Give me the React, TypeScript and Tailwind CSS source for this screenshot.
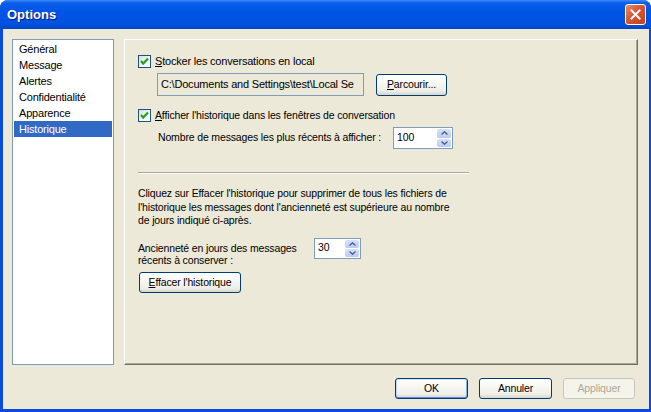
import React from "react";

const btn =
  "h-[21px] rounded-[3px] border border-[#003C74] bg-[linear-gradient(180deg,#FFFFFF_0%,#F7F6F1_45%,#EEEDE7_80%,#D9D4C8_100%)] leading-none text-black flex items-center justify-center";

function Check() {
  return (
    <div className="w-[13px] h-[13px] border border-[#1C5180] bg-[linear-gradient(135deg,#DCDCD7_0%,#F6F6F3_60%,#FFFFFF_100%)] flex items-center justify-center shrink-0">
      <svg width="11" height="11" viewBox="0 0 11 11">
        <polyline points="2,5 4.2,7.5 9,2.5" fill="none" stroke="#21A121" strokeWidth="2.2" />
      </svg>
    </div>
  );
}

function Spin({ value, w }: { value: string; w: string }) {
  return (
    <div className="flex h-full border border-[#7F9DB9] bg-white">
      <div className={`${w} h-full flex items-center pl-[3px]`}>{value}</div>
      <div className="w-[16px] h-full flex flex-col p-[1px] gap-[1px] bg-white">
        <div className="flex-1 rounded-[2px] bg-[linear-gradient(180deg,#D6E1FB,#B9CBF6)] flex items-center justify-center">
          <svg width="7" height="4" viewBox="0 0 7 4">
            <polyline points="0.5,3.5 3.5,0.8 6.5,3.5" fill="none" stroke="#4D6185" strokeWidth="1.4" />
          </svg>
        </div>
        <div className="flex-1 rounded-[2px] bg-[linear-gradient(180deg,#D6E1FB,#B9CBF6)] flex items-center justify-center">
          <svg width="7" height="4" viewBox="0 0 7 4">
            <polyline points="0.5,0.5 3.5,3.2 6.5,0.5" fill="none" stroke="#4D6185" strokeWidth="1.4" />
          </svg>
        </div>
      </div>
    </div>
  );
}

export default function App() {
  const items = ["Général", "Message", "Alertes", "Confidentialité", "Apparence", "Historique"];
  return (
    <div className="w-[651px] h-[412px] bg-white overflow-hidden font-['Liberation_Sans',Arial,sans-serif] text-[10.5px] tracking-[-0.15px] text-black">
      <div className="flex flex-col w-full h-full rounded-t-[8px] overflow-hidden bg-[#0A4BDF]">
        {/* Title bar */}
        <div className="h-[29px] shrink-0 flex items-center justify-between pl-[7px] pr-[5px] bg-[linear-gradient(180deg,#3A8CF6_0px,#0A5EEB_3px,#0055E5_40%,#0052E0_80%,#0046C8_100%)]">
          <span className="text-white font-bold text-[13px] tracking-normal [text-shadow:1px_1px_0_#0A1883]">Options</span>
          <div className="w-[21px] h-[21px] rounded-[3px] border border-white bg-[linear-gradient(135deg,#E98B6C_0%,#DA5530_45%,#C4401A_100%)] flex items-center justify-center">
            <svg width="11" height="11" viewBox="0 0 11 11">
              <path d="M1.5 1.5 L9.5 9.5 M9.5 1.5 L1.5 9.5" stroke="white" strokeWidth="2" strokeLinecap="square" />
            </svg>
          </div>
        </div>
        {/* Body */}
        <div className="flex-1 flex pl-[3px] pr-[2px] pb-[3px]">
          <div className="flex-1 bg-[#ECE9D8] flex flex-col pt-[10px] pl-[9px] pr-[11px]">
            <div className="flex h-[326px] gap-[10px]">
              {/* List */}
              <div className="w-[102px] h-full border border-[#7F9DB9] bg-white p-[1px]">
                {items.map((it) => (
                  <div
                    key={it}
                    className={`h-[16px] flex items-center pl-[5px] text-[11px] tracking-[-0.2px] ${it === "Historique" ? "bg-[#316AC5] text-white" : ""}`}
                  >
                    {it}
                  </div>
                ))}
              </div>
              {/* Panel */}
              <div className="flex-1 h-full border border-t-white border-l-white border-r-[#716F64] border-b-[#716F64] shadow-[inset_-1px_-1px_0_#ACA899] pl-[13px] pt-[15px] flex flex-col whitespace-nowrap">
                <div className="h-[13px] flex items-center">
                  <Check />
                  <span className="ml-[4px] text-[11px] tracking-[-0.2px]"><u>S</u>tocker les conversations en local</span>
                </div>
                <div className="mt-[5px] flex items-center pl-[19px] h-[23px]">
                  <div className="w-[207px] h-[23px] border border-[#7F9DB9] bg-[#ECE9D8] flex items-center pl-[3px] overflow-hidden text-[11px] tracking-[-0.2px]">
                    C:\Documents and Settings\test\Local Se
                  </div>
                  <div className={`${btn} w-[71px] h-[22px] ml-[12px]`}>
                    <span><u>P</u>arcourir...</span>
                  </div>
                </div>
                <div className="mt-[13px] h-[13px] flex items-center">
                  <Check />
                  <span className="ml-[4px]"><u>A</u>fficher l'historique dans les fenêtres de conversation</span>
                </div>
                <div className="mt-[5px] flex items-center pl-[20px] h-[22px]">
                  <span className="w-[235px] shrink-0">Nombre de messages les plus récents à afficher :</span>
                  <Spin value="100" w="w-[42px]" />
                </div>
                <div className="mt-[23px] w-[331px] border-t border-[#ACA899] border-b border-b-white" />
                <p className="mt-[13px] leading-[13.5px]">
                  Cliquez sur Effacer l'historique pour supprimer de tous les fichiers de
                  <br />
                  l'historique les messages dont l'ancienneté est supérieure au nombre
                  <br />
                  de jours indiqué ci-après.
                </p>
                <div className="mt-[10px] flex items-start">
                  <div className="w-[176px] shrink-0 pt-[4px] leading-[12.5px]">
                    Ancienneté en jours des messages
                    <br />
                    récents à conserver :
                  </div>
                  <div className="h-[21px]">
                    <Spin value="30" w="w-[29px]" />
                  </div>
                </div>
                <div className={`${btn} mt-[5px] w-[102px] ml-[1px]`}>
                  <span><u>E</u>ffacer l'historique</span>
                </div>
              </div>
            </div>
            {/* Bottom buttons */}
            <div className="flex justify-end gap-[11px] mt-[13px] pr-[3px]">
              <div className={`${btn} w-[73px] shadow-[inset_0_1px_0_#CEE7FF,inset_0_-1px_0_#6982EE,inset_1px_0_0_#BCD4F6,inset_-1px_0_0_#89ADE4]`}>OK</div>
              <div className={`${btn} w-[73px]`}>Annuler</div>
              <div className="h-[21px] w-[72px] rounded-[3px] border border-[#C9C7BA] bg-[#F5F4EA] text-[#ACA899] flex items-center justify-center">
                Appliquer
              </div>
            </div>
          </div>
        </div>
      </div>
    </div>
  );
}
